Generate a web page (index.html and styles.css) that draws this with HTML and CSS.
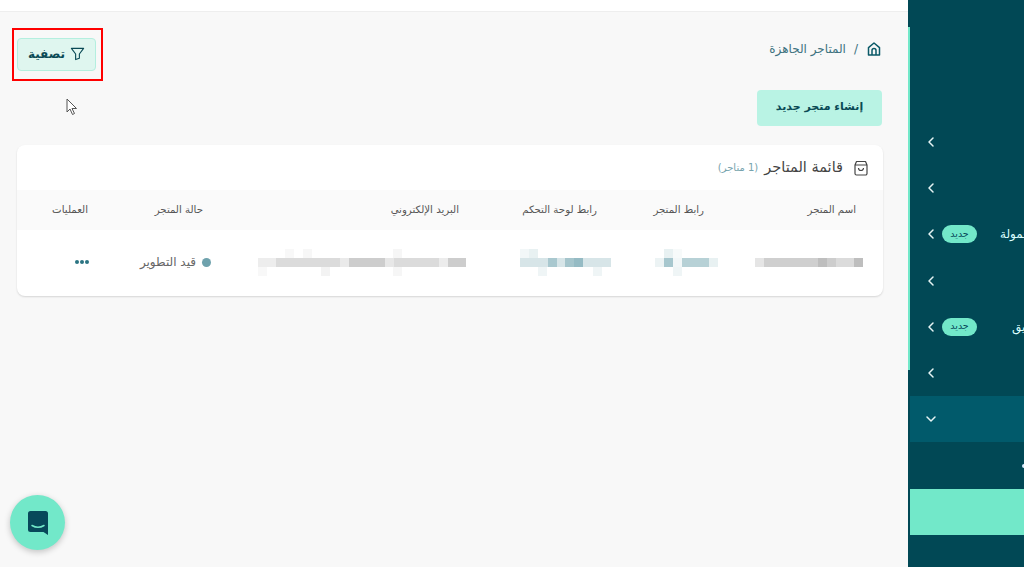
FILE: index.html
```html
<!DOCTYPE html>
<html lang="ar" dir="rtl">
<head>
<meta charset="utf-8">
<title>المتاجر الجاهزة</title>
<link rel="stylesheet" href="styles.css">
</head>
<body>
<main class="main">
  <div class="topbar"></div>
  <div class="content">
    <div class="toolbar">
      <nav class="crumbs">
        <svg class="home" viewBox="0 0 16 16" width="16" height="16"><path d="M2.500 14V6.600L8 2l5.500 4.600V14z M6 14V9.500a2 2 0 0 1 4 0V14" fill="none" stroke="#0b5a68" stroke-width="1.500" stroke-linejoin="round"/></svg>
        <span class="sep">/</span>
        <span>المتاجر الجاهزة</span>
      </nav>
      <div class="filter-wrap">
        <button class="filter">
          <svg viewBox="0 0 16 16" width="15" height="15"><path d="M1.500 2.500h13L10 8.500V13l-4 1.500v-6z" fill="none" stroke="#0a4a55" stroke-width="1.200" stroke-linejoin="round"/></svg>
          <span>تصفية</span>
        </button>
        <div class="annotation"></div>
      </div>
    </div>
    <button class="create">إنشاء متجر جديد</button>
    <section class="card">
      <header class="card-head">
        <svg viewBox="0 0 16 16" width="16" height="16"><path d="M2 5h12v8.500a1.500 1.500 0 0 1-1.500 1.500h-9A1.500 1.500 0 0 1 2 13.500z M3.500 1.500h9L14 5H2z M5.500 8a2.500 2.500 0 0 0 5 0" fill="none" stroke="#444" stroke-width="1.200" stroke-linejoin="round"/></svg>
        <h2>قائمة المتاجر</h2>
        <span class="count">(1 متاجر)</span>
      </header>
      <div class="grid heads">
        <div class="h1">اسم المتجر</div>
        <div class="h2">رابط المتجر</div>
        <div class="h3">رابط لوحة التحكم</div>
        <div class="h4">البريد الإلكتروني</div>
        <div class="h5">حالة المتجر</div>
        <div class="h6">العمليات</div>
      </div>
      <div class="grid row">
        <div class="c1">
          <svg class="blur" width="108" height="27" viewBox="0 0 108 27" fill="#888">
            <rect x="0" y="9" width="9" height="9" fill-opacity=".22"/><rect x="9" y="9" width="54" height="9" fill-opacity=".4"/><rect x="63" y="9" width="9" height="9" fill-opacity=".55"/><rect x="72" y="9" width="9" height="9" fill-opacity=".42"/><rect x="81" y="9" width="18" height="9" fill-opacity=".3"/><rect x="99" y="9" width="9" height="9" fill-opacity=".55"/>
          </svg>
        </div>
        <div class="c2">
          <svg class="blur" width="63" height="27" viewBox="0 0 63 27" fill="#5f99a5">
            <rect x="0" y="9" width="9" height="9" fill-opacity=".12"/><rect x="9" y="9" width="9" height="9" fill-opacity=".55"/><rect x="9" y="0" width="9" height="9" fill-opacity=".14"/><rect x="18" y="0" width="9" height="9" fill-opacity=".05"/><rect x="18" y="9" width="9" height="9" fill-opacity=".08"/><rect x="18" y="18" width="9" height="9" fill-opacity=".1"/><rect x="27" y="9" width="27" height="9" fill-opacity=".45"/><rect x="54" y="9" width="9" height="9" fill-opacity=".14"/>
          </svg>
        </div>
        <div class="c3">
          <svg class="blur" width="91" height="27" viewBox="0 0 91 27" fill="#5f99a5">
            <rect x="0" y="9" width="91" height="9" fill-opacity=".25"/><rect x="28" y="9" width="9" height="9" fill-opacity=".38"/><rect x="45" y="9" width="9" height="9" fill-opacity=".42"/><rect x="54" y="9" width="9" height="9" fill-opacity=".55"/><rect x="0" y="0" width="9" height="9" fill-opacity=".08"/><rect x="9" y="0" width="9" height="9" fill-opacity=".14"/><rect x="18" y="18" width="9" height="9" fill-opacity=".1"/><rect x="73" y="18" width="9" height="9" fill-opacity=".1"/>
          </svg>
        </div>
        <div class="c4">
          <svg class="blur" width="208" height="27" viewBox="0 0 208 27" fill="#888">
            <rect x="0" y="9" width="18" height="9" fill-opacity=".15"/><rect x="18" y="9" width="64" height="9" fill-opacity=".3"/><rect x="82" y="9" width="9" height="9" fill-opacity=".18"/><rect x="91" y="9" width="36" height="9" fill-opacity=".42"/><rect x="127" y="9" width="9" height="9" fill-opacity=".2"/><rect x="136" y="9" width="45" height="9" fill-opacity=".3"/><rect x="181" y="9" width="9" height="9" fill-opacity=".16"/><rect x="190" y="9" width="18" height="9" fill-opacity=".42"/><rect x="63" y="18" width="9" height="9" fill-opacity=".1"/><rect x="135" y="18" width="9" height="9" fill-opacity=".08"/><rect x="0" y="18" width="9" height="9" fill-opacity=".06"/><rect x="45" y="0" width="9" height="9" fill-opacity=".07"/><rect x="27" y="0" width="9" height="9" fill-opacity=".06"/><rect x="135" y="0" width="9" height="9" fill-opacity=".08"/>
          </svg>
        </div>
        <div class="c5"><span class="dot"></span><span>قيد التطوير</span></div>
        <div class="c6"><span class="pip"></span><span class="pip"></span><span class="pip"></span></div>
      </div>
    </section>
  </div>
  <svg class="cursor" width="13" height="18" viewBox="0 0 13 18"><path d="M1 1v13l3-3 2.500 5.500 2-1L6 10.500h4.500z" fill="#fff" stroke="#555" stroke-width="1"/></svg>
  <button class="chat">
    <svg viewBox="0 0 20 24" width="20" height="24"><path d="M2.500 0h15A2.500 2.500 0 0 1 20 2.500V24l-4.500-3h-13A2.500 2.500 0 0 1 0 18.500v-16A2.500 2.500 0 0 1 2.500 0z" fill="#07485a"/><path d="M4 14.500q6 3.500 12 0" fill="none" stroke="#72e8c9" stroke-width="1.500" stroke-linecap="round"/></svg>
  </button>
</main>
<aside class="sidebar">
  <span class="scroll"></span>
  <div class="side-top"></div>
  <div class="item"><svg class="chev" viewBox="0 0 8 12" width="8" height="12"><path d="M6 2L2 6l4 4"/></svg></div>
  <div class="item"><svg class="chev" viewBox="0 0 8 12" width="8" height="12"><path d="M6 2L2 6l4 4"/></svg></div>
  <div class="item"><span class="label anchor-a">برنامج العمولة</span><span class="badge">جديد</span><svg class="chev" viewBox="0 0 8 12" width="8" height="12"><path d="M6 2L2 6l4 4"/></svg></div>
  <div class="item"><svg class="chev" viewBox="0 0 8 12" width="8" height="12"><path d="M6 2L2 6l4 4"/></svg></div>
  <div class="item"><span class="label anchor-b">التسويق</span><span class="badge">جديد</span><svg class="chev" viewBox="0 0 8 12" width="8" height="12"><path d="M6 2L2 6l4 4"/></svg></div>
  <div class="item"><svg class="chev" viewBox="0 0 8 12" width="8" height="12"><path d="M6 2L2 6l4 4"/></svg></div>
  <div class="item active"><svg class="chev down" viewBox="0 0 12 8" width="12" height="8"><path d="M2 2l4 4 4-4"/></svg></div>
  <div class="item sub"><span class="bullet"></span></div>
  <div class="item selected"></div>
</aside>
</body>
</html>
```
FILE: styles.css
```css
* { box-sizing: border-box; }
html, body { margin: 0; height: 100%; overflow: hidden; }
body {
  display: flex;
  direction: ltr;
  font-family: "DejaVu Sans", "Noto Sans", sans-serif;
  background: #f8f8f8;
  color: #444;
}
button { font: inherit; cursor: pointer; }

.main { position: relative; width: 908px; height: 567px; direction: rtl; flex: none; }
.topbar { height: 12px; background: #fff; border-bottom: 1px solid #eee; }
.content { padding: 0 26px 0 25px; }

.toolbar { display: flex; justify-content: space-between; align-items: flex-start; padding-top: 26px; }
.crumbs { display: flex; align-items: center; gap: 8px; font-size: 12px; color: #3d7280; height: 22px; }
.filter-wrap { position: relative; margin-left: -8px; }
.filter {
  display: flex; align-items: center; justify-content: center; gap: 5px;
  width: 79px; height: 33px; background: #dff6ef; border: 1px solid #b4efdf; border-radius: 4px;
  color: #0a4a55; font-size: 12px; font-weight: 700; padding: 0 0 2px;
}
.annotation { position: absolute; inset: -10px -7px -10px -5px; border: 2px solid #f00; }

.create {
  display: block; width: 125px; height: 36px; margin-top: 19px;
  background: #b9f3e4; border: 0; border-radius: 4px; color: #0a4a55; font-size: 11px; font-weight: 700; padding: 0 0 3px;
}

.card {
  margin: 19px -1px 0 -8px; height: 151px; background: #fff; border-radius: 8px;
  box-shadow: 0 1px 2px rgba(0,0,0,.14);
  overflow: hidden;
}
.card-head { display: flex; align-items: center; gap: 10px; height: 45px; padding: 0 14px 0; }
.card-head h2 { margin: 0 0 2px; font-size: 14.500px; font-weight: 400; color: #444; }
.count { font-size: 10px; color: #76a3ad; margin-right: -4px; }

.grid { display: grid; grid-template-columns: 152px 107px 138px 256px 115px 98px; align-items: center; }
.heads { height: 40px; background: #fafafa; font-size: 10.200px; color: #555; padding-bottom: 2px; }
.heads > div { padding-right: 27px; }
.row { height: 66px; font-size: 12px; color: #666; padding-bottom: 2px; }
.row > div { display: flex; align-items: center; }
.blur { display: block; }
.c1 { padding-right: 20px; }
.c2 { margin-right: -7px; padding-right: 20px; }
.c3 { padding-right: 13px; }
.c4 { padding-right: 20px; }
.c5 { padding-right: 19px; gap: 6px; }
.c6 { padding-right: 26px; gap: 1px; }
.dot { width: 9px; height: 9px; border-radius: 50%; background: #6fa2ad; }
.pip { width: 4px; height: 4px; border-radius: 50%; background: #2b7482; }

.cursor { position: absolute; left: 66px; top: 98px; }
.chat {
  position: absolute; left: 10px; top: 495px; width: 55px; height: 55px; border: 0; border-radius: 50%;
  background: #72e8c9; box-shadow: 0 2px 6px rgba(0,0,0,.22);
  display: flex; align-items: center; justify-content: center; padding: 0;
}

.sidebar {
  position: relative; width: 116px; height: 567px; background: #014855; overflow: hidden; direction: rtl;
  padding-left: 2px; flex: none;
}
.scroll { position: absolute; left: 0; top: 27px; width: 2px; height: 343px; background: #72e8c9; }
.side-top { height: 119px; }
.item { height: 46.200px; display: flex; align-items: center; justify-content: flex-end; padding-left: 17px; width: 114px; color: #dff; font-size: 12px; }
.chev { fill: none; stroke: #e6f4f4; stroke-width: 1.500; stroke-linecap: round; stroke-linejoin: round; flex: none; }
.chev.down { margin-left: -2px; }
.badge {
  width: 35px; height: 18px; border-radius: 9px; background: #72e8c9; color: #07485a; font-size: 9.500px;
  display: flex; align-items: center; justify-content: center; margin-left: 7px; flex: none; padding-bottom: 2px;
}
.label { white-space: nowrap; flex: none; }
.anchor-a { margin-left: 23px; }
.anchor-b { margin-left: 35px; }
.active { background: #015a6b; }
.sub { position: relative; }
.bullet { position: absolute; left: 112px; top: 22px; width: 4px; height: 4px; border-radius: 50%; background: #d8ecff; }
.selected { background: #72e8c9; }
```
